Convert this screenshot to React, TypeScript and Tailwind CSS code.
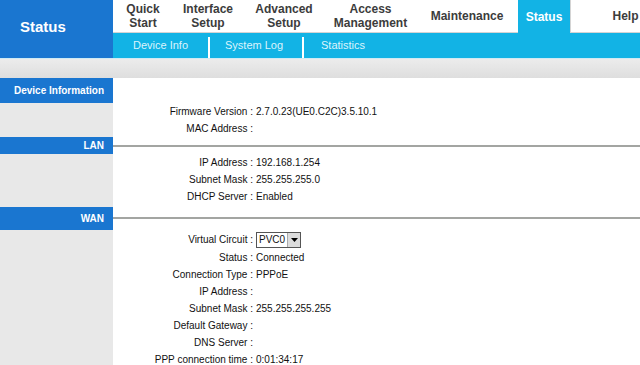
import React from "react";

const tabs = [
  { l1: "Quick", l2: "Start", w: "w-[60px]" },
  { l1: "Interface", l2: "Setup", w: "w-[70px]" },
  { l1: "Advanced", l2: "Setup", w: "w-[82px]" },
  { l1: "Access", l2: "Management", w: "w-[91px]" },
  { l1: "Maintenance", l2: "", w: "w-[102px]" },
];

function Row({ label, value, h = "h-[17px]" }: { label: string; value?: React.ReactNode; h?: string }) {
  return (
    <div className={`flex ${h} items-center`}>
      <div className="w-[113px] h-full bg-[#e8e8e8]" />
      <div className="w-[140px] text-right whitespace-nowrap">{label} :</div>
      <div className="pl-[3px] whitespace-nowrap">{value}</div>
    </div>
  );
}

function SectionHead({ title, h, barH, mt, line }: { title: string; h: string; barH: string; mt: string; line: boolean }) {
  return (
    <div className={`flex ${h}`}>
      <div className={`w-[113px] h-full bg-[#e8e8e8] flex flex-col ${mt}`}>
        <div className={`${barH} bg-[#1a76d0] text-white font-bold text-[10px] flex items-center justify-end pr-[9px]`}>
          {title}
        </div>
      </div>
      <div className="flex-1 flex items-center">
        {line && <div className="w-full h-[2px] bg-[#a3a5a2]" />}
      </div>
    </div>
  );
}

export default function App() {
  return (
    <div className="w-[640px] h-[365px] overflow-hidden bg-white" style={{ fontFamily: '"Liberation Sans", Arial, sans-serif' }}>
      {/* header */}
      <div className="flex h-[58px]">
        <div className="w-[113px] h-full bg-[#1a76d0] text-white font-bold text-[15px] flex items-center pl-[20px] pb-[4px]">
          Status
        </div>
        <div className="flex-1 flex flex-col min-w-0">
          <div className="h-[33px] flex bg-white overflow-hidden">
            {tabs.map((t) => (
              <div
                key={t.l1}
                className={`${t.w} shrink-0 h-full flex flex-col items-center justify-center text-[12px] font-bold text-[#3c3c3c] leading-[14px] border-b border-[#d4d4d4]`}
              >
                <span>{t.l1}</span>
                {t.l2 && <span>{t.l2}</span>}
              </div>
            ))}
            <div className="w-[52px] shrink-0 h-full bg-[#12b3e5] text-white text-[12px] font-bold flex items-center justify-center">
              Status
            </div>
            <div className="w-[110px] shrink-0 h-full flex items-center justify-center text-[12px] font-bold text-[#3c3c3c] border-b border-l border-[#d4d4d4]">
              Help
            </div>
          </div>
          <div className="h-[25px] bg-[#12b3e5] flex items-stretch text-[11px] text-[#dcf4fc]">
            <div className="w-[95px] pl-[20px] flex items-center">Device Info</div>
            <div className="w-[2px] bg-white mt-[4px]" />
            <div className="w-[92px] pl-[15px] flex items-center">System Log</div>
            <div className="w-[2px] bg-white mt-[4px]" />
            <div className="pl-[17px] flex items-center">Statistics</div>
          </div>
        </div>
      </div>
      {/* gray band */}
      <div className="h-[20px] bg-gradient-to-b from-[#ececec] to-[#dedede] border-t border-[#cfeaf4]" />

      <div className="text-[10px] text-[#111]">
        <SectionHead title="Device Information" h="h-[25px]" barH="h-[25px]" mt="" line={false} />
        <Row label="Firmware Version" value="2.7.0.23(UE0.C2C)3.5.10.1" />
        <Row label="MAC Address" value="" />
        <SectionHead title="LAN" h="h-[17px]" barH="h-[17px]" mt="" line={true} />
        <Row label="IP Address" value="192.168.1.254" />
        <Row label="Subnet Mask" value="255.255.255.0" />
        <Row label="DHCP Server" value="Enabled" />
        <SectionHead title="WAN" h="h-[25px]" barH="h-[23px]" mt="pt-[2px]" line={true} />
        <Row
          label="Virtual Circuit"
          h="h-[19px]"
          value={
            <div className="flex items-center h-[16px] w-[45px] border border-[#555] bg-white">
              <span className="pl-[2px] flex-1 text-[10px]">PVC0</span>
              <span className="w-[13px] h-full bg-[#dcdcdc] border-l border-[#aaa] flex items-center justify-center">
                <svg width="7" height="4" viewBox="0 0 7 4"><path d="M0 0H7L3.5 4Z" fill="#000" /></svg>
              </span>
            </div>
          }
        />
        <Row label="Status" value="Connected" />
        <Row label="Connection Type" value="PPPoE" />
        <Row label="IP Address" value="" />
        <Row label="Subnet Mask" value="255.255.255.255" />
        <Row label="Default Gateway" value="" />
        <Row label="DNS Server" value="" />
        <Row label="PPP connection time" value="0:01:34:17" />
      </div>
    </div>
  );
}
